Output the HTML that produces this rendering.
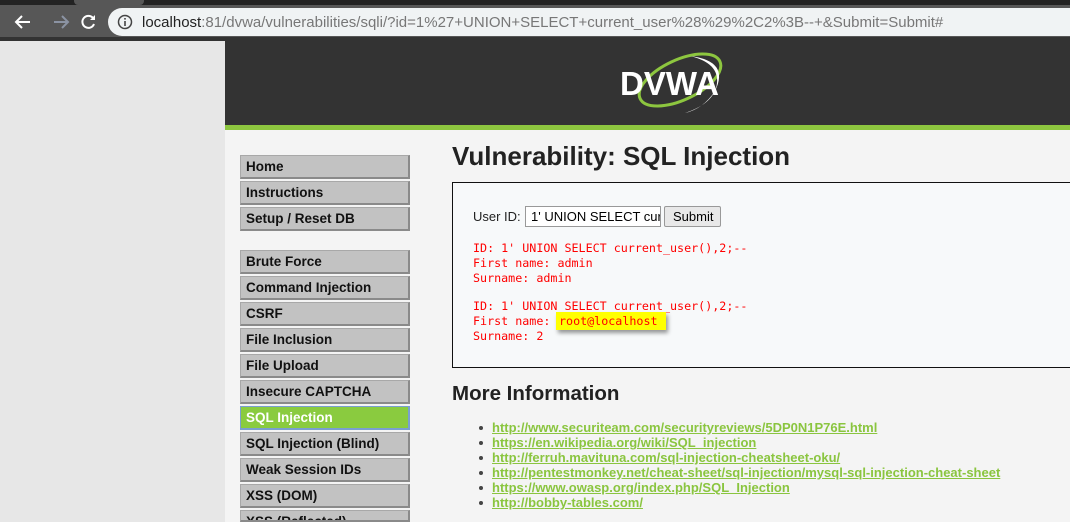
<!DOCTYPE html>
<html style="width:1070px;height:522px;overflow:hidden"><head><style>
*{margin:0;padding:0;box-sizing:border-box}
body{width:1070px;height:522px;overflow:hidden;background:#f4f4f4;font-family:"Liberation Sans",Arial,sans-serif;position:relative}
.abs{position:absolute}
.menu{position:absolute;left:240px;width:170px;height:24px;background:#c2c2c2;border:1px solid #a8a8a8;border-bottom:2px solid #8a8a8a;border-right:2px solid #8a8a8a;font-weight:bold;font-size:13.5px;color:#111;padding:3px 0 0 5px;white-space:nowrap;overflow:hidden}
.sel{background:#8acb3f;color:#fff;border-color:#7a9fd0}
pre{font-family:"DejaVu Sans Mono","Liberation Mono",monospace;font-size:11.7px;color:#ff0000;line-height:15px}
.links a{display:block;color:#8ac53f;font-weight:bold;font-size:13px;text-decoration:underline;line-height:15px;position:relative}
.links a:before{content:"";position:absolute;left:-13px;top:6px;width:4px;height:4px;background:#444;border-radius:50%}
</style></head><body>
<div class="abs" style="left:0;top:0;width:1070px;height:5px;background:#232323"></div>
<div class="abs" style="left:74px;top:0;width:70px;height:5px;background:#575757;border-radius:0 0 4px 4px"></div>
<div class="abs" style="left:0;top:5px;width:1070px;height:32px;background:#575757"></div>
<div class="abs" style="left:0;top:37px;width:1070px;height:4px;background:#333"></div>
<svg class="abs" style="left:10px;top:12px" width="90" height="20" viewBox="0 0 90 20">
<path d="M20 10H6M12 4L6 10l6 6" stroke="#fff" stroke-width="2" fill="none"/>
<path d="M44 10h14M52 4l6 6-6 6" stroke="#8b93a3" stroke-width="2" fill="none"/>
<path d="M83 6a6 6 0 1 0 1 6" stroke="#fff" stroke-width="2" fill="none"/><path d="M85 3v5h-5z" fill="#fff"/>
</svg>
<div class="abs" style="left:108px;top:8px;width:990px;height:28px;background:#f0f3f4;border-radius:14px"></div>
<svg class="abs" style="left:117px;top:14px" width="16" height="16"><circle cx="8" cy="8" r="6.5" stroke="#444" stroke-width="1.5" fill="none"/><rect x="7.2" y="7" width="1.6" height="5" fill="#444"/><rect x="7.2" y="4" width="1.6" height="1.6" fill="#444"/></svg>
<div class="abs" style="left:142px;top:14px;font-size:15px;color:#777;white-space:nowrap"><span style="color:#222">localhost</span>:81/dvwa/vulnerabilities/sqli/?id=1%27+UNION+SELECT+current_user%28%29%2C2%3B--+&amp;Submit=Submit#</div>
<div class="abs" style="left:0;top:41px;width:225px;height:481px;background:#e7e7e7"></div>
<div class="abs" style="left:225px;top:41px;width:845px;height:84px;background:#333"></div>
<div class="abs" style="left:225px;top:125px;width:845px;height:5px;background:#8dc63f"></div>
<svg class="abs" style="left:615px;top:50px" width="120" height="65" viewBox="0 0 120 65">
<ellipse cx="65" cy="30" rx="44" ry="20" transform="rotate(-25 65 30)" stroke="#8dc63f" stroke-width="3" fill="none"/>
<path d="M75 6q40 5 25 35q-12 18-30 22q30-10 32-30q2-20-27-27z" fill="#fff"/>
<text x="5" y="45" font-family="Liberation Sans" font-weight="bold" font-size="33" fill="#fff">DVWA</text>
</svg>
<div class="menu" style="top:155px">Home</div>
<div class="menu" style="top:181px">Instructions</div>
<div class="menu" style="top:207px">Setup / Reset DB</div>
<div class="menu" style="top:250px">Brute Force</div>
<div class="menu" style="top:276px">Command Injection</div>
<div class="menu" style="top:302px">CSRF</div>
<div class="menu" style="top:328px">File Inclusion</div>
<div class="menu" style="top:354px">File Upload</div>
<div class="menu" style="top:380px">Insecure CAPTCHA</div>
<div class="menu sel" style="top:406px">SQL Injection</div>
<div class="menu" style="top:432px">SQL Injection (Blind)</div>
<div class="menu" style="top:458px">Weak Session IDs</div>
<div class="menu" style="top:484px">XSS (DOM)</div>
<div class="menu" style="top:510px;height:12px">XSS (Reflected)</div>
<div class="abs" style="left:452px;top:141px;font-size:26px;font-weight:bold;color:#222">Vulnerability: SQL Injection</div>
<div class="abs" style="left:452px;top:182px;width:630px;height:186px;background:#f7f9fa;border:1px solid #111"></div>
<div class="abs" style="left:473px;top:209px;font-size:13px;color:#222">User ID:</div>
<div class="abs" style="left:525px;top:206px;width:136px;height:21px;background:#fff;border:1px solid #999;font-size:13px;padding:2px 5px;overflow:hidden;white-space:nowrap">1' UNION SELECT current_user(),2;--</div>
<div class="abs" style="left:664px;top:206px;width:57px;height:21px;background:#e8e8e8;border:1px solid #999;border-radius:2px;font-size:13px;padding:2px 0 0 8px">Submit</div>
<pre class="abs" style="left:473px;top:241px">ID: 1' UNION SELECT current_user(),2;--
First name: admin
Surname: admin</pre>
<pre class="abs" style="left:473px;top:299px">ID: 1' UNION SELECT current_user(),2;--
First name: 
Surname: 2</pre>
<div class="abs" style="left:556px;top:312px;width:110px;height:18px;background:#ffff00;box-shadow:2px 3px 4px rgba(0,0,0,.4)"></div>
<pre class="abs" style="left:559px;top:314px">root@localhost</pre>
<div class="abs" style="left:452px;top:382px;font-size:20.5px;font-weight:bold;color:#222">More Information</div>
<div class="abs links" style="left:492px;top:420px">
<a>http://www.securiteam.com/securityreviews/5DP0N1P76E.html</a>
<a>https://en.wikipedia.org/wiki/SQL_injection</a>
<a>http://ferruh.mavituna.com/sql-injection-cheatsheet-oku/</a>
<a>http://pentestmonkey.net/cheat-sheet/sql-injection/mysql-sql-injection-cheat-sheet</a>
<a>https://www.owasp.org/index.php/SQL_Injection</a>
<a>http://bobby-tables.com/</a>
</div>
</body></html>
